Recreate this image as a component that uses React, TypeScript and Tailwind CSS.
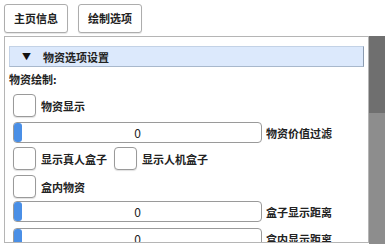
const font = { fontFamily: '"Noto Sans CJK SC", "Noto Sans", sans-serif' };

function Checkbox({ label }: { label: string }) {
  return (
    <div className="flex items-center">
      <div className="w-[23px] h-[23px] rounded-[4px] border border-[#9a9a9a] bg-white shadow-[0_1px_1px_rgba(0,0,0,0.12)]" />
      <span className="ml-[5px] text-[11px] font-bold leading-[14px] text-[#222]">{label}</span>
    </div>
  );
}

function Slider({ label, value }: { label: string; value: number }) {
  return (
    <div className="flex items-center">
      <div className="relative w-[249px] h-[21px] rounded-[4px] border border-[#9a9a9a] bg-white flex items-center justify-center">
        <div className="absolute left-0 top-0 w-[8px] h-[19px] rounded-[3px] bg-[#4a8fe6]" />
        <span className="text-[12px] leading-[14px] text-[#222]">{value}</span>
      </div>
      <span className="ml-[4px] text-[11px] font-bold leading-[14px] text-[#222]">{label}</span>
    </div>
  );
}

export default function App() {
  return (
    <div className="w-[388px] h-[245px] bg-white overflow-hidden" style={font}>
      <div className="flex gap-[10px] pl-[4px] pt-[4px]">
        <button className="w-[64px] h-[29px] rounded-[3px] border border-[#adadad] bg-white text-[11px] font-bold text-[#222] shadow-[0_1px_1px_rgba(0,0,0,0.1)]">
          主页信息
        </button>
        <button className="w-[64px] h-[29px] rounded-[3px] border border-[#adadad] bg-white text-[11px] font-bold text-[#222] shadow-[0_1px_1px_rgba(0,0,0,0.1)]">
          绘制选项
        </button>
      </div>
      <div className="flex mt-[3px]">
        <div className="ml-[4px] w-[365px] h-[207px] border border-[#b5b5b5] overflow-hidden px-[4px] pt-[9px]">
          <div className="h-[21px] flex items-center bg-[#dce9fc] border border-[#c3d2e6] border-r-[#8b9bb0] border-b-[#a8b8cc] pl-[12px]">
            <span className="text-[9px] text-[#111] leading-none">▼</span>
            <span className="ml-[12px] text-[11px] font-bold leading-[14px] text-[#222]">物资选项设置</span>
          </div>
          <div className="mt-[5px] text-[11px] font-bold leading-[14px] text-[#222]">物资绘制:</div>
          <div className="pl-[4px] flex flex-col">
            <div className="mt-[8px]">
              <Checkbox label="物资显示" />
            </div>
            <div className="mt-[5px]">
              <Slider label="物资价值过滤" value={0} />
            </div>
            <div className="mt-[4px] flex gap-[7px]">
              <Checkbox label="显示真人盒子" />
              <Checkbox label="显示人机盒子" />
            </div>
            <div className="mt-[5px]">
              <Checkbox label="盒内物资" />
            </div>
            <div className="mt-[3px]">
              <Slider label="盒子显示距离" value={0} />
            </div>
            <div className="mt-[6px]">
              <Slider label="盒内显示距离" value={0} />
            </div>
          </div>
        </div>
        <div className="w-[16px] h-[208px] flex flex-col">
          <div className="h-[77px] bg-[#6f6f6f]" />
          <div className="flex-1 bg-[#8d8d8d]" />
        </div>
      </div>
    </div>
  );
}
